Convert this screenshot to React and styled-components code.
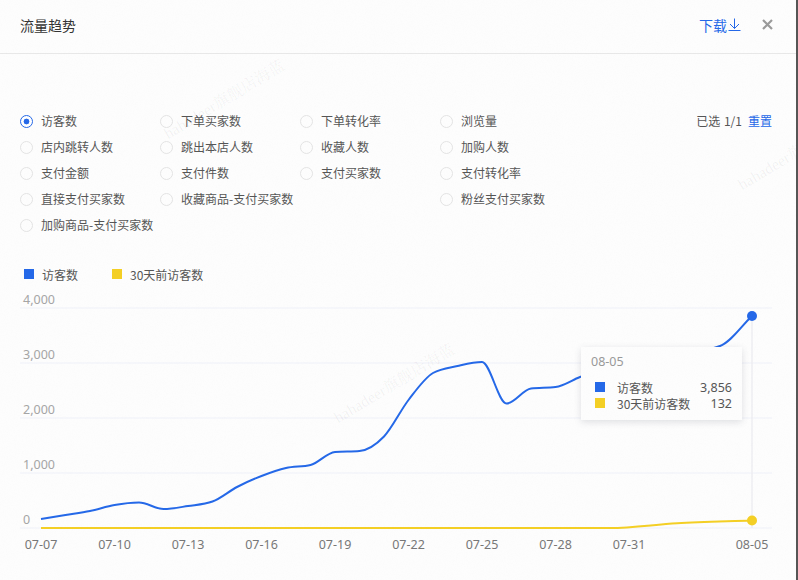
import React from "react";
import styled, { createGlobalStyle } from "styled-components";

const BLUE = "#2468e8";
const YELLOW = "#f4cf24";
const SANS = `"Noto Sans CJK SC", "Noto Sans", sans-serif`;
const LATIN = `"Noto Sans", "Noto Sans CJK SC", sans-serif`;

const GlobalStyle = createGlobalStyle`
  html, body { margin: 0; padding: 0; background: #fdfdfd; }
  * { box-sizing: border-box; }
`;

const Page = styled.div`
  position: relative;
  width: 798px;
  height: 580px;
  overflow: hidden;
  display: flex;
  flex-direction: column;
  background: #fdfdfd;
  font-family: ${SANS};
  font-size: 12px;
  color: #444;
  border-right: 2px solid #555;
`;

const Header = styled.header`
  height: 54px;
  flex: none;
  display: flex;
  align-items: center;
  padding: 0 23px 4px 20px;
  border-bottom: 1px solid #e8e8e8;
`;

const Title = styled.h1`
  margin: 0;
  flex: 1;
  font-size: 14px;
  font-weight: 400;
  line-height: 20px;
  color: #333;
`;

const DownloadLink = styled.a`
  display: flex;
  align-items: center;
  gap: 1px;
  font-size: 14px;
  line-height: 20px;
  color: ${BLUE};
`;

const CloseButton = styled.button`
  margin-left: 21px;
  padding: 0;
  width: 11px;
  height: 11px;
  border: 0;
  background: none;
  display: flex;
`;

const Filters = styled.section`
  flex: none;
  display: flex;
  justify-content: space-between;
  padding: 54px 24px 0 20px;
`;

const OptionGrid = styled.div`
  display: grid;
  grid-template-columns: repeat(4, 140px);
  grid-auto-rows: 26px;
`;

const Option = styled.label`
  display: flex;
  align-items: center;
  gap: 8px;
  grid-column: ${(p) => p.$column || "auto"};
  line-height: 26px;
  color: #555;
`;

const Radio = styled.span`
  width: 13px;
  height: 13px;
  flex: none;
  border-radius: 50%;
  border: 1px solid ${(p) => (p.$checked ? BLUE : "#e4e4e4")};
  background: ${(p) =>
    p.$checked ? `radial-gradient(circle, ${BLUE} 0 2.6px, #fff 3.2px)` : "#fdfdfd"};
`;

const Selection = styled.div`
  display: flex;
  gap: 6px;
  line-height: 26px;
  color: #555;
`;

const Count = styled.span`
  word-spacing: 1px;
`;

const ResetLink = styled.a`
  color: ${BLUE};
`;

const Legend = styled.div`
  flex: none;
  display: flex;
  gap: 34px;
  margin: 26px 0 6px;
  padding-left: 24px;
  height: 20px;
`;

const LegendItem = styled.div`
  display: flex;
  align-items: center;
  gap: 8px;
  color: #555;
`;

const Swatch = styled.i`
  display: block;
  flex: none;
  width: 10px;
  height: 10px;
  background: ${(p) => p.$color};
`;

const ChartArea = styled.div`
  position: relative;
  flex: 1;
  min-height: 0;
`;

const ChartSvg = styled.svg`
  display: block;
  width: 798px;
  height: 290px;
`;

const AxisText = styled.text`
  font-family: ${LATIN};
  font-size: 12.5px;
  fill: ${(p) => p.$fill};
`;

const Tooltip = styled.div`
  position: absolute;
  left: 581px;
  top: 57px;
  width: 161px;
  height: 73px;
  padding: 6px 10px 0;
  background: #fdfdfd;
  box-shadow: 0 2px 7px rgba(60, 70, 90, 0.16);
  color: #555;
`;

const TooltipDate = styled.div`
  font-family: ${LATIN};
  font-size: 12.5px;
  line-height: 18px;
  color: #999;
  margin-bottom: 8px;
`;

const TooltipRow = styled.div`
  display: flex;
  align-items: center;
  height: 16px;
  padding-left: 4px;
`;

const TooltipLabel = styled.span`
  flex: 1;
  margin-left: 12px;
`;

const TooltipValue = styled.span`
  font-family: ${LATIN};
  font-size: 12.5px;
`;

const Watermark = styled.div`
  position: absolute;
  left: ${(p) => p.$x}px;
  top: ${(p) => p.$y}px;
  transform: rotate(-31deg);
  transform-origin: 0 100%;
  font-family: "Liberation Serif", "Noto Serif CJK SC", "Noto Sans CJK SC", serif;
  font-size: 16px;
  line-height: 18px;
  white-space: nowrap;
  color: rgba(70, 70, 90, 0.065);
  pointer-events: none;
`;

const Noise = styled.svg`
  position: absolute;
  inset: 0;
  width: 798px;
  height: 580px;
  pointer-events: none;
`;

const options = [
  ["访客数", "auto", true], ["下单买家数"], ["下单转化率"], ["浏览量"],
  ["店内跳转人数"], ["跳出本店人数"], ["收藏人数"], ["加购人数"],
  ["支付金额"], ["支付件数"], ["支付买家数"], ["支付转化率"],
  ["直接支付买家数"], ["收藏商品-支付买家数"], ["粉丝支付买家数", 4],
  ["加购商品-支付买家数"],
];

const bluePoints = [
  [41, 519], [65.5, 515], [90, 511], [114.5, 505], [139, 502.5], [163.5, 509],
  [188, 506], [212.5, 501.5], [237, 487], [261.5, 476], [286, 468], [310.5, 465],
  [335, 452], [359.5, 451], [384, 436.5], [408.5, 400], [433, 373], [457.5, 366],
  [482, 362], [506.5, 403.5], [531, 388.5], [555.5, 387], [580, 377], [604.5, 368],
  [629, 362], [720, 346], [752, 316],
];
const yellowPoints = [[41, 528], [610, 528], [677, 523.3], [752, 520.5]];

// Monotone cubic interpolation: keeps local extremes flat, with no overshoot.
const monotone = (pts) => {
  const n = pts.length;
  const h = [];
  const s = [];
  for (let i = 0; i < n - 1; i++) {
    h[i] = pts[i + 1][0] - pts[i][0];
    s[i] = (pts[i + 1][1] - pts[i][1]) / h[i];
  }
  const m = pts.map((_, i) => {
    if (i === 0) return s[0];
    if (i === n - 1) return s[n - 2];
    if (s[i - 1] * s[i] <= 0) return 0;
    const p = (s[i - 1] * h[i] + s[i] * h[i - 1]) / (h[i - 1] + h[i]);
    return (Math.sign(s[i - 1]) + Math.sign(s[i])) *
      Math.min(Math.abs(s[i - 1]), Math.abs(s[i]), 0.5 * Math.abs(p));
  });
  let d = `M${pts[0][0]} ${pts[0][1]}`;
  for (let i = 0; i < n - 1; i++) {
    const c = h[i] / 3;
    d += ` C${pts[i][0] + c} ${pts[i][1] + m[i] * c} ${pts[i + 1][0] - c} ${pts[i + 1][1] - m[i + 1] * c} ${pts[i + 1][0]} ${pts[i + 1][1]}`;
  }
  return d;
};

const gridRows = [
  [308, "4,000"], [363, "3,000"], [418, "2,000"], [473, "1,000"], [528, "0"],
];
const xLabels = [
  [41, "07-07"], [114.5, "07-10"], [188, "07-13"], [261.5, "07-16"], [335, "07-19"],
  [408.5, "07-22"], [482, "07-25"], [555.5, "07-28"], [629, "07-31"], [752, "08-05"],
];

export default function App() {
  return (
    <Page>
      <GlobalStyle />
      <Header>
        <Title>流量趋势</Title>
        <DownloadLink>
          下载
          <svg width="13" height="14" viewBox="0 0 13 14" fill="none" stroke={BLUE} strokeWidth="1">
            <path d="M6.5 0.5V10.5M2 6l4.5 4.5L11 6M0.5 12.5h12" />
          </svg>
        </DownloadLink>
        <CloseButton aria-label="关闭">
          <svg width="11" height="11" viewBox="0 0 11 11" stroke="#9a9a9a" strokeWidth="2.2" fill="none">
            <path d="M1 1l9 9M10 1l-9 9" />
          </svg>
        </CloseButton>
      </Header>
      <Filters>
        <OptionGrid>
          {options.map(([name, column, checked]) => (
            <Option key={name} $column={column}>
              <Radio $checked={checked} />
              {name}
            </Option>
          ))}
        </OptionGrid>
        <Selection>
          <Count>已选 1/1</Count>
          <ResetLink>重置</ResetLink>
        </Selection>
      </Filters>
      <Legend>
        <LegendItem><Swatch $color={BLUE} />访客数</LegendItem>
        <LegendItem><Swatch $color={YELLOW} />30天前访客数</LegendItem>
      </Legend>
      <ChartArea>
        <ChartSvg viewBox="0 290 798 290">
          {gridRows.map(([y, label]) => (
            <g key={label}>
              <line x1="20" x2="772" y1={y} y2={y} stroke="#f3f4fa" strokeWidth="1.4" />
              <AxisText x={23} y={y - 4} $fill="#a5a5a5">{label}</AxisText>
            </g>
          ))}
          <line x1="752" x2="752" y1="316" y2="528" stroke="#eeeef2" strokeWidth="1.5" />
          <path d={monotone(yellowPoints)} fill="none" stroke={YELLOW} strokeWidth="2" />
          <path d={monotone(bluePoints)} fill="none" stroke={BLUE} strokeWidth="2" />
          <circle cx="752" cy="316" r="5" fill={BLUE} />
          <circle cx="752" cy="520.5" r="5" fill={YELLOW} />
          {xLabels.map(([x, label]) => (
            <AxisText key={label} x={x} y={549} textAnchor="middle" $fill="#777">{label}</AxisText>
          ))}
        </ChartSvg>
        <Tooltip>
          <TooltipDate>08-05</TooltipDate>
          <TooltipRow>
            <Swatch $color={BLUE} />
            <TooltipLabel>访客数</TooltipLabel>
            <TooltipValue>3,856</TooltipValue>
          </TooltipRow>
          <TooltipRow>
            <Swatch $color={YELLOW} />
            <TooltipLabel>30天前访客数</TooltipLabel>
            <TooltipValue>132</TooltipValue>
          </TooltipRow>
        </Tooltip>
      </ChartArea>
      <Watermark $x={170} $y={125}>hahadeer旗舰店海蓝</Watermark>
      <Watermark $x={340} $y={409}>hahadeer旗舰店海蓝</Watermark>
      <Watermark $x={744} $y={176}>hahadeer旗舰店海蓝</Watermark>
      <Noise aria-hidden="true">
        <filter id="paper">
          <feTurbulence type="fractalNoise" baseFrequency="0.9" numOctaves="2" seed="4" />
          <feColorMatrix values="0 0 0 0 0.5  0 0 0 0 0.5  0 0 0 0 0.5  0.5 0 0 0 -0.19" />
        </filter>
        <rect width="798" height="580" filter="url(#paper)" opacity="0.12" />
      </Noise>
    </Page>
  );
}
